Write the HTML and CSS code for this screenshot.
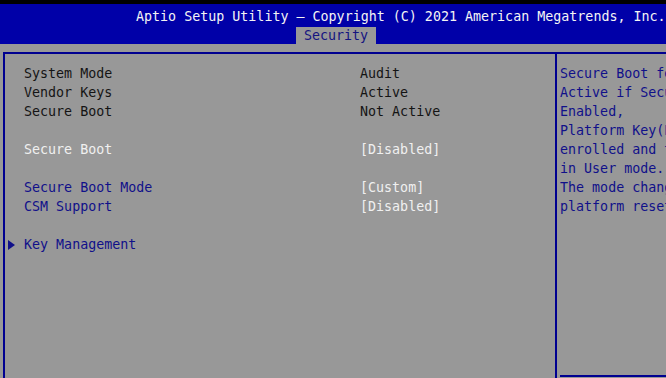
FILE: index.html
```html
<!DOCTYPE html>
<html>
<head>
    <title>Aptio Setup Utility</title>
    <link rel="stylesheet" href="styles.css">
</head>
<body>
    <div class="header">
        <div class="title">Aptio Setup Utility – Copyright (C) 2021 American Megatrends, Inc.</div>
        <div class="tabs">
            <span class="tab">Security</span>
        </div>
    </div>
    <div class="main">
        <div class="frame">
            <div class="items">
                <div class="row info"><span class="mark"></span><span>System Mode</span><span>Audit</span></div>
                <div class="row info"><span class="mark"></span><span>Vendor Keys</span><span>Active</span></div>
                <div class="row info"><span class="mark"></span><span>Secure Boot</span><span>Not Active</span></div>
                <div class="row blank"></div>
                <div class="row selected"><span class="mark"></span><span>Secure Boot</span><span>[Disabled]</span></div>
                <div class="row blank"></div>
                <div class="row option"><span class="mark"></span><span>Secure Boot Mode</span><span class="value">[Custom]</span></div>
                <div class="row option"><span class="mark"></span><span>CSM Support</span><span class="value">[Disabled]</span></div>
                <div class="row blank"></div>
                <div class="row option"><span class="mark"><span class="arrow"></span></span><span>Key Management</span><span></span></div>
            </div>
            <div class="help">
                <div class="help-text">Secure Boot feature is
Active if Secure Boot is
Enabled,
Platform Key(PK) is
enrolled and the System
in User mode.
The mode change requires
platform reset</div>
                <div class="sep"></div>
            </div>
        </div>
    </div>
</body>
</html>
```

FILE: styles.css
```css
html, body {
    margin: 0;
    padding: 0;
    height: 100%;
    overflow: hidden;
}
body {
    background-color: #989898;
    font-family: "DejaVu Sans Mono", "Liberation Mono", monospace;
    font-size: 13.33px;
    line-height: 19px;
    display: flex;
    flex-direction: column;
}
.header {
    background-color: #0000a8;
    border-top: 4px solid #000000;
    padding-top: 3px;
}
.title {
    color: #f4f4f4;
    padding-left: 136px;
    white-space: nowrap;
}
.tabs {
    height: 18px;
    padding-left: 296px;
}
.tab {
    display: inline-block;
    width: 80px;
    height: 18px;
    line-height: 18px;
    background-color: #989898;
    color: #141480;
    text-align: center;
}
.main {
    flex: 1;
    display: flex;
    padding: 8px 0 0 3px;
}
.frame {
    flex: 1;
    display: flex;
    border-top: 2px solid #000090;
    border-left: 2px solid #000090;
}
.items {
    width: 550px;
    flex-shrink: 0;
    padding-top: 10px;
    border-right: 2px solid #000090;
}
.row {
    display: grid;
    grid-template-columns: 19px 336px 1fr;
    height: 19px;
    white-space: nowrap;
}
.info {
    color: #141414;
}
.selected {
    color: #f0f0f0;
}
.option {
    color: #10108a;
}
.option .value {
    color: #f0f0f0;
}
.mark {
    display: flex;
    align-items: center;
    padding-left: 3px;
}
.arrow {
    width: 0;
    height: 0;
    border-top: 5px solid transparent;
    border-bottom: 5px solid transparent;
    border-left: 7px solid #10108a;
}
.help {
    flex: 1;
    display: flex;
    flex-direction: column;
    padding-left: 3px;
    min-width: 0;
    overflow: hidden;
}
.help-text {
    padding-top: 10px;
    color: #10108a;
    white-space: pre;
}
.sep {
    margin-top: auto;
    margin-bottom: 1px;
    height: 2px;
    background-color: #000090;
}
```
